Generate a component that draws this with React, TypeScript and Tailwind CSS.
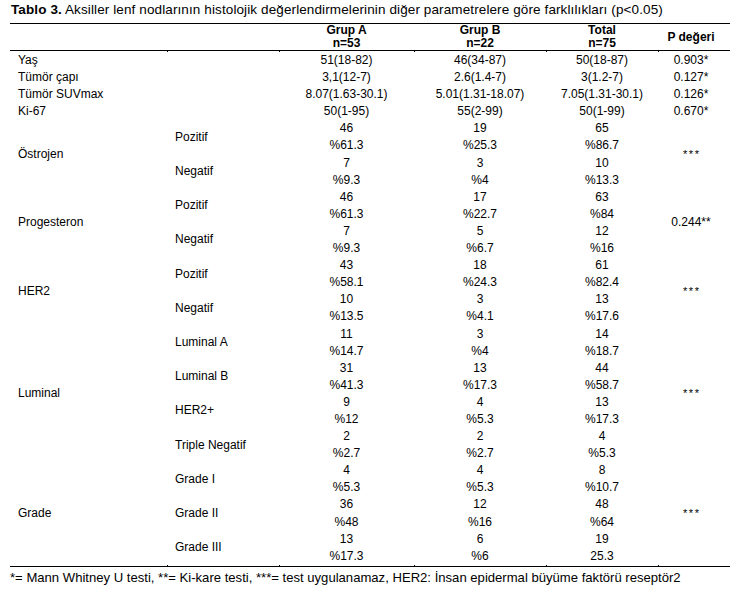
import React from "react";

type Pair = [string, string];
type SubRow = { label: string; a: Pair; b: Pair; t: Pair };
type Group = { label: string; p: string; rows: SubRow[] };

const simpleRows = [
  ["Yaş", "51(18-82)", "46(34-87)", "50(18-87)", "0.903*"],
  ["Tümör çapı", "3,1(12-7)", "2.6(1.4-7)", "3(1.2-7)", "0.127*"],
  ["Tümör SUVmax", "8.07(1.63-30.1)", "5.01(1.31-18.07)", "7.05(1.31-30.1)", "0.126*"],
  ["Ki-67", "50(1-95)", "55(2-99)", "50(1-99)", "0.670*"],
];

const groups: Group[] = [
  {
    label: "Östrojen",
    p: "***",
    rows: [
      { label: "Pozitif", a: ["46", "%61.3"], b: ["19", "%25.3"], t: ["65", "%86.7"] },
      { label: "Negatif", a: ["7", "%9.3"], b: ["3", "%4"], t: ["10", "%13.3"] },
    ],
  },
  {
    label: "Progesteron",
    p: "0.244**",
    rows: [
      { label: "Pozitif", a: ["46", "%61.3"], b: ["17", "%22.7"], t: ["63", "%84"] },
      { label: "Negatif", a: ["7", "%9.3"], b: ["5", "%6.7"], t: ["12", "%16"] },
    ],
  },
  {
    label: "HER2",
    p: "***",
    rows: [
      { label: "Pozitif", a: ["43", "%58.1"], b: ["18", "%24.3"], t: ["61", "%82.4"] },
      { label: "Negatif", a: ["10", "%13.5"], b: ["3", "%4.1"], t: ["13", "%17.6"] },
    ],
  },
  {
    label: "Luminal",
    p: "***",
    rows: [
      { label: "Luminal A", a: ["11", "%14.7"], b: ["3", "%4"], t: ["14", "%18.7"] },
      { label: "Luminal B", a: ["31", "%41.3"], b: ["13", "%17.3"], t: ["44", "%58.7"] },
      { label: "HER2+", a: ["9", "%12"], b: ["4", "%5.3"], t: ["13", "%17.3"] },
      { label: "Triple Negatif", a: ["2", "%2.7"], b: ["2", "%2.7"], t: ["4", "%5.3"] },
    ],
  },
  {
    label: "Grade",
    p: "***",
    rows: [
      { label: "Grade I", a: ["4", "%5.3"], b: ["4", "%5.3"], t: ["8", "%10.7"] },
      { label: "Grade II", a: ["36", "%48"], b: ["12", "%16"], t: ["48", "%64"] },
      { label: "Grade III", a: ["13", "%17.3"], b: ["6", "%6"], t: ["19", "25.3"] },
    ],
  },
];

const span: Record<number, string> = { 2: "row-span-2", 3: "row-span-3", 4: "row-span-4" };
const cols = "grid grid-cols-[157px_112px_135px_132px_112px_72px]";

function P({ v }: { v: string }) {
  if (v === "***") {
    return <span className="text-[11px] tracking-[1.5px] pl-[1.5px]">***</span>;
  }
  return <span>{v}</span>;
}

// little 1px stubs the column borders leave next to the rules
function Ticks() {
  return (
    <div className={`${cols} h-px`}>
      <div />
      <div className="border-l border-black" />
      <div className="border-l border-black" />
      <div className="border-l border-black" />
      <div className="border-l border-black" />
      <div className="border-l border-black" />
    </div>
  );
}

export default function App() {
  return (
    <div className="w-[744px] h-[596px] bg-white text-black font-['Liberation_Sans',Arial,sans-serif] overflow-hidden">
      <div className="pt-[2px] pl-[11px] text-[13.5px] tracking-[0.11px] leading-[15px] h-[23px] whitespace-nowrap">
        <span className="font-bold">Tablo 3.</span> Aksiller lenf nodlarının histolojik değerlendirmelerinin diğer parametrelere göre farklılıkları (p&lt;0.05)
      </div>

      <div className="ml-[10px] w-[720px] text-[12px]">
        {/* header */}
        <div className={`${cols} border-t border-b border-black h-[28px] font-bold leading-[13px]`}>
          <div />
          <div />
          <div className="flex flex-col items-center justify-center">
            <span>Grup A</span>
            <span>n=53</span>
          </div>
          <div className="flex flex-col items-center justify-center">
            <span>Grup B</span>
            <span>n=22</span>
          </div>
          <div className="flex flex-col items-center justify-center">
            <span>Total</span>
            <span>n=75</span>
          </div>
          <div className="flex items-center justify-center pr-[6px]">P değeri</div>
        </div>
        <Ticks />

        {/* simple rows */}
        {simpleRows.map((r) => (
          <div key={r[0]} className={`${cols} leading-[17.1px]`}>
            <div className="pl-2">{r[0]}</div>
            <div />
            <div className="text-center">{r[1]}</div>
            <div className="text-center">{r[2]}</div>
            <div className="text-center">{r[3]}</div>
            <div className="text-center pr-[6px]">{r[4]}</div>
          </div>
        ))}

        {/* grouped rows */}
        <div className={`${cols} leading-[17.1px]`}>
          {groups.map((g) =>
            g.rows.map((s, i) => (
              <React.Fragment key={g.label + s.label}>
                {i === 0 && (
                  <div className={`${span[g.rows.length]} flex items-center pl-2`}>{g.label}</div>
                )}
                <div className="flex items-center pl-2">{s.label}</div>
                <div className="flex flex-col items-center">
                  <span>{s.a[0]}</span>
                  <span>{s.a[1]}</span>
                </div>
                <div className="flex flex-col items-center">
                  <span>{s.b[0]}</span>
                  <span>{s.b[1]}</span>
                </div>
                <div className="flex flex-col items-center">
                  <span>{s.t[0]}</span>
                  <span>{s.t[1]}</span>
                </div>
                {i === 0 && (
                  <div className={`${span[g.rows.length]} flex items-center justify-center pr-[6px]`}>
                    <P v={g.p} />
                  </div>
                )}
              </React.Fragment>
            ))
          )}
        </div>

        <Ticks />
        <div className="border-t border-black" />
      </div>

      <div className="pl-[10px] pt-[3px] text-[13.1px] leading-[15px] whitespace-nowrap">
        *= Mann Whitney U testi, **= Ki-kare testi, ***= test uygulanamaz, HER2: İnsan epidermal büyüme faktörü reseptör2
      </div>
    </div>
  );
}
